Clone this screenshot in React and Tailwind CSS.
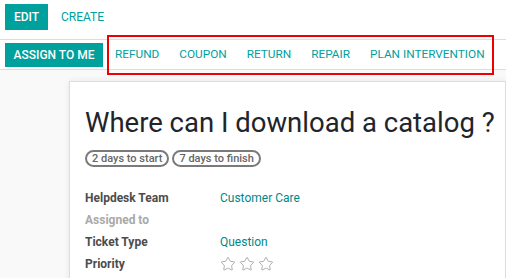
import { Star } from "lucide-react";

const actions = ["REFUND", "COUPON", "RETURN", "REPAIR", "PLAN INTERVENTION"];

const fields = [
  { label: "Helpdesk Team", value: "Customer Care" },
  { label: "Assigned to", muted: true },
  { label: "Ticket Type", value: "Question" },
  { label: "Priority", stars: true },
];

export default function App() {
  return (
    <div
      className="w-[506px] h-[278px] overflow-hidden bg-[#f9f9f9] text-[#4c4c4c]"
      style={{ fontFamily: "Roboto, 'Liberation Sans', sans-serif" }}
    >
      <div className="bg-white">
        <div className="flex items-start h-[40px] pt-[4px] pl-[5px] border-b border-[#dcdde0]">
          <button className="h-[26px] w-[43px] bg-[#00a09d] text-white text-[12px] font-medium">
            EDIT
          </button>
          <button className="h-[26px] ml-[5px] px-[8px] text-[#00a09d] text-[12px]">
            CREATE
          </button>
        </div>
        <div className="relative flex items-center h-[30px] pl-[5px] border-b border-[#dcdde0]">
          <button className="h-[24px] w-[98px] shrink-0 whitespace-nowrap bg-[#00a09d] text-white text-[12px] font-medium">
            ASSIGN TO ME
          </button>
          <div className="flex items-center ml-[2px]">
            {actions.map((a) => (
              <button
                key={a}
                className="h-[24px] px-[10px] shrink-0 whitespace-nowrap text-[#00a09d] text-[11.8px]"
              >
                {a}
              </button>
            ))}
          </div>
          <div className="absolute left-[107px] top-[-5px] w-[387px] h-[40px] border-2 border-[#ee0000] pointer-events-none" />
        </div>
      </div>
      <div className="pl-[69px] pt-[11px]">
        <div className="bg-white border border-[#dcdde0] shadow-[0_0_6px_rgba(0,0,0,0.08)] h-[300px] pl-[15px] pt-[23px]">
          <h1 className="text-[27.5px] leading-[36px] whitespace-nowrap text-[#212529]">
            Where can I download a catalog ?
          </h1>
          <div className="flex gap-[3px] mt-[9px]">
            <span className="h-[17px] flex items-center px-[5px] rounded-full border-2 border-[#7a7a7a] text-[11px] font-medium text-[#666666] leading-none">
              2 days to start
            </span>
            <span className="h-[17px] flex items-center px-[5px] rounded-full border-2 border-[#7a7a7a] text-[11px] font-medium text-[#666666] leading-none">
              7 days to finish
            </span>
          </div>
          <div className="mt-[20px] flex flex-col">
            {fields.map((f) => (
              <div key={f.label} className="flex items-center h-[22px]">
                <div
                  className={`w-[135px] text-[12px] font-bold ${
                    f.muted ? "text-[#a9a9a9]" : "text-[#4c4c4c]"
                  }`}
                >
                  {f.label}
                </div>
                {f.value && (
                  <div className="text-[12px] text-[#00878a]">{f.value}</div>
                )}
                {f.stars && (
                  <div className="flex gap-[3px]">
                    {[0, 1, 2].map((i) => (
                      <Star
                        key={i}
                        size={16}
                        strokeWidth={1.3}
                        className="text-[#a0a0a0]"
                      />
                    ))}
                  </div>
                )}
              </div>
            ))}
          </div>
        </div>
      </div>
    </div>
  );
}
